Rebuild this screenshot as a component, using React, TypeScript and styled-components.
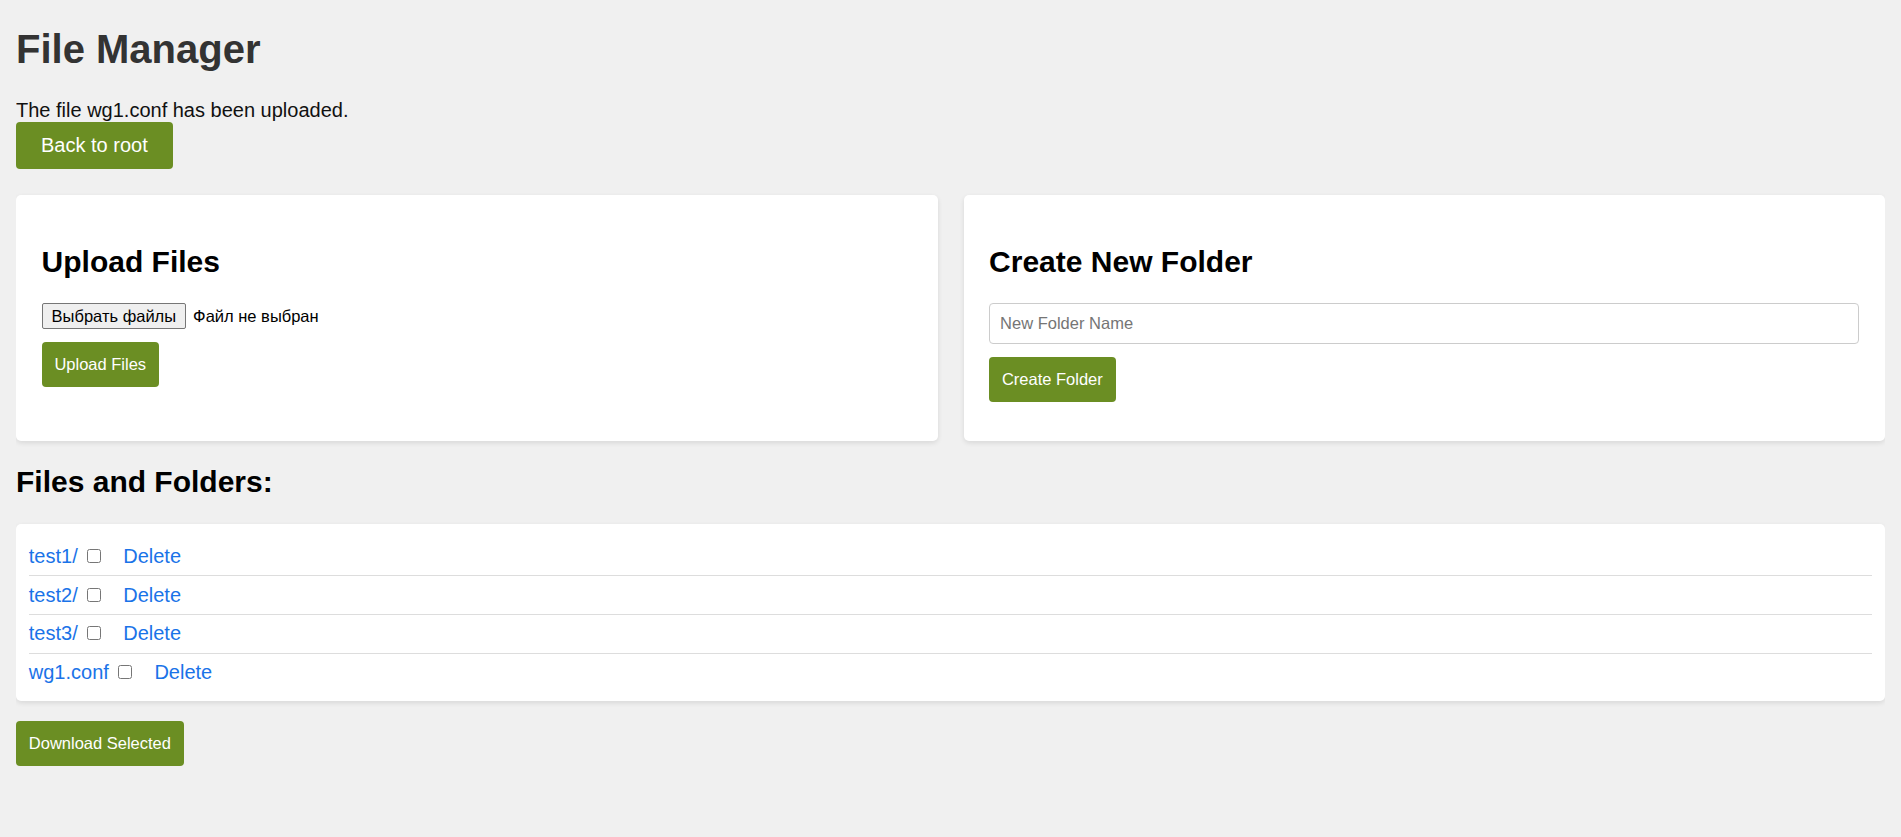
import React from "react";
import styled, { createGlobalStyle } from "styled-components";

const GlobalStyle = createGlobalStyle`
  * { box-sizing: border-box; }
  body {
    margin: 0 16px 16px;
    background: #f0f0f0;
    color: #111;
    font-family: "Liberation Sans", Arial, sans-serif;
  }
`;

const Title = styled.h1`
  font-size: 40px;
  font-weight: bold;
  color: #333;
  margin: 26.8px 0;
`;

const Message = styled.div`
  font-size: 20px;
`;

const BackButton = styled.a`
  display: block;
  width: fit-content;
  background: #6b8e23;
  color: #fff;
  font-size: 20px;
  padding: 12px 25px;
  border-radius: 4px;
  text-decoration: none;
`;

const Panels = styled.div`
  display: grid;
  grid-template-columns: 1fr 1fr;
  gap: 26px;
  margin-top: 26px;
`;

const Card = styled.section`
  background: #fff;
  border-radius: 5px;
  padding: 25.6px;
  box-shadow: 0 2px 5px rgba(0, 0, 0, 0.1);
`;

const SectionTitle = styled.h2`
  font-size: 30px;
  font-weight: bold;
  color: #000;
  margin: 24.5px 0;
`;

const Form = styled.form`
  display: flex;
  flex-direction: column;
  align-items: flex-start;
  gap: 13px;
  margin-bottom: 13.5px;
`;

const FilePicker = styled.label`
  display: flex;
  align-items: center;
  gap: 7px;
  font-size: 16.5px;
  color: #000;
  cursor: pointer;

  input {
    display: none;
  }
`;

const FileButton = styled.span`
  display: inline-block;
  padding: 2.5px 9px;
  border: 1px solid #767676;
  border-radius: 2px;
  background: #efefef;
  line-height: normal;
`;

const TextInput = styled.input`
  align-self: stretch;
  width: 100%;
  font-family: "Liberation Sans", Arial, sans-serif;
  font-size: 16.5px;
  padding: 10px;
  border: 1px solid #ccc;
  border-radius: 4px;
  color: #000;
  &::placeholder {
    color: #757575;
  }
`;

const ActionButton = styled.button`
  background: #6b8e23;
  color: #fff;
  border: none;
  border-radius: 4px;
  font-family: "Liberation Sans", Arial, sans-serif;
  font-size: 16.5px;
  line-height: normal;
  padding: 12.8px;
  cursor: pointer;
`;

const ListCard = styled.div`
  background: #fff;
  border-radius: 5px;
  padding: 14px 12.8px 10px;
  box-shadow: 0 2px 5px rgba(0, 0, 0, 0.1);
  margin-bottom: 20px;
`;

const Row = styled.div`
  padding: 7.3px 0;
  font-size: 20px;
  border-bottom: 1px solid #ddd;
  &:last-child {
    border-bottom: none;
  }
`;

const Check = styled.input`
  width: 14px;
  height: 14px;
  margin: 3px 3px 3px 4px;
`;

const ItemLink = styled.a<{ $gap?: boolean }>`
  color: #1a73e8;
  text-decoration: none;
  margin-left: ${(p) => (p.$gap ? "13.4px" : "0")};
`;

const items = ["test1/", "test2/", "test3/", "wg1.conf"];

export default function App() {
  return (
    <>
      <GlobalStyle />
      <Title>File Manager</Title>
      <Message>The file wg1.conf has been uploaded.</Message>
      <BackButton href="#">Back to root</BackButton>
      <Panels>
        <Card>
          <SectionTitle>Upload Files</SectionTitle>
          <Form onSubmit={(e) => e.preventDefault()}>
            <FilePicker>
              <input type="file" multiple />
              <FileButton>Выбрать файлы</FileButton>
              <span>Файл не выбран</span>
            </FilePicker>
            <ActionButton type="submit">Upload Files</ActionButton>
          </Form>
        </Card>
        <Card>
          <SectionTitle>Create New Folder</SectionTitle>
          <Form onSubmit={(e) => e.preventDefault()}>
            <TextInput type="text" placeholder="New Folder Name" />
            <ActionButton type="submit">Create Folder</ActionButton>
          </Form>
        </Card>
      </Panels>
      <SectionTitle>Files and Folders:</SectionTitle>
      <ListCard>
        {items.map((name) => (
          <Row key={name}>
            <ItemLink href="#">{name}</ItemLink> <Check type="checkbox" />{" "}
            <ItemLink href="#" $gap>
              Delete
            </ItemLink>
          </Row>
        ))}
      </ListCard>
      <ActionButton type="button">Download Selected</ActionButton>
    </>
  );
}
